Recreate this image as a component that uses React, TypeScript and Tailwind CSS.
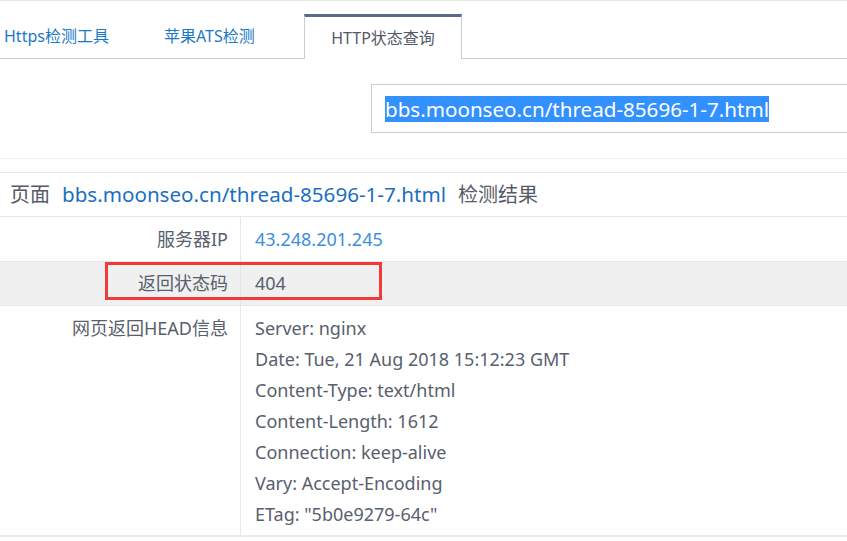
import React from "react";

// 响应头信息
const headLines: string[] = [
  "Server: nginx",
  "Date: Tue, 21 Aug 2018 15:12:23 GMT",
  "Content-Type: text/html",
  "Content-Length: 1612",
  "Connection: keep-alive",
  "Vary: Accept-Encoding",
  'ETag: "5b0e9279-64c"',
];

const font = "font-['Segoe_UI','Noto_Sans','Noto_Sans_CJK_SC',sans-serif]";

const App: React.FC = () => {
  return (
    <div className={`w-[847px] h-[541px] overflow-hidden bg-white border-t border-[#e6e6e6] ${font}`}>
      {/* tabs */}
      <div className="relative h-[58px] border-b border-[#c5cdd9] flex items-end text-[16px]">
        <div className="w-[164px] pl-[4px] h-[44px] flex items-center text-[#1a78c8]">Https检测工具</div>
        <div className="w-[140px] h-[44px] flex items-center text-[#1a78c8]">苹果ATS检测</div>
        <div className="w-[158px] h-[45px] -mb-px bg-white border-t-[3px] border-t-[#5a6a8a] border-x border-x-[#c5cdd9] flex items-center justify-center text-[#555a66]">
          HTTP状态查询
        </div>
      </div>

      {/* input */}
      <div className="h-[100px] border-b border-[#f0f0f0] pt-[25px] pl-[371px]">
        <div className="h-[49px] border border-[#c8cdd8] border-r-0 flex items-center pl-[13px] text-[20.6px]">
          <span className="bg-[#3390ff] text-white leading-[26px]">bbs.moonseo.cn/thread-85696-1-7.html</span>
        </div>
      </div>

      <div className="h-[14px] border-b border-[#e8e8e8]" />

      {/* title */}
      <div className="h-[44px] border-b border-[#e8e8e8] flex items-center pl-[10px] text-[20px] text-[#555a66]">
        <span>页面</span>
        <span className="ml-[12px] text-[20.6px] text-[#1a6fc0]">bbs.moonseo.cn/thread-85696-1-7.html</span>
        <span className="ml-[12px]">检测结果</span>
      </div>

      {/* result table */}
      <div className="text-[18px] text-[#58606e]">
        <div className="flex h-[45px] border-b border-[#e8e8e8]">
          <div className="w-[241px] pr-[12px] flex items-center justify-end border-r border-[#e8e8e8]">服务器IP</div>
          <div className="pl-[14px] flex items-center text-[#3d8de0]">43.248.201.245</div>
        </div>
        <div className="relative flex h-[44px] bg-[#f0f0f0] border-b border-[#e8e8e8]">
          <div className="w-[241px] pr-[12px] flex items-center justify-end border-r border-[#e4e4e4]">返回状态码</div>
          <div className="pl-[14px] flex items-center">404</div>
          <div className="absolute left-[105px] top-0 w-[277px] h-[38px] border-[3px] border-[#f23a3a]" />
        </div>
        <div className="flex h-[231px] border-b-2 border-[#ebebeb]">
          <div className="w-[241px] pr-[12px] pt-[7px] leading-[31px] text-right border-r border-[#e8e8e8]">网页返回HEAD信息</div>
          <div className="pl-[14px] pt-[7px]">
            {headLines.map((line) => (
              <div key={line} className="h-[31px] leading-[31px]">
                {line}
              </div>
            ))}
          </div>
        </div>
      </div>
    </div>
  );
};

export default App;
